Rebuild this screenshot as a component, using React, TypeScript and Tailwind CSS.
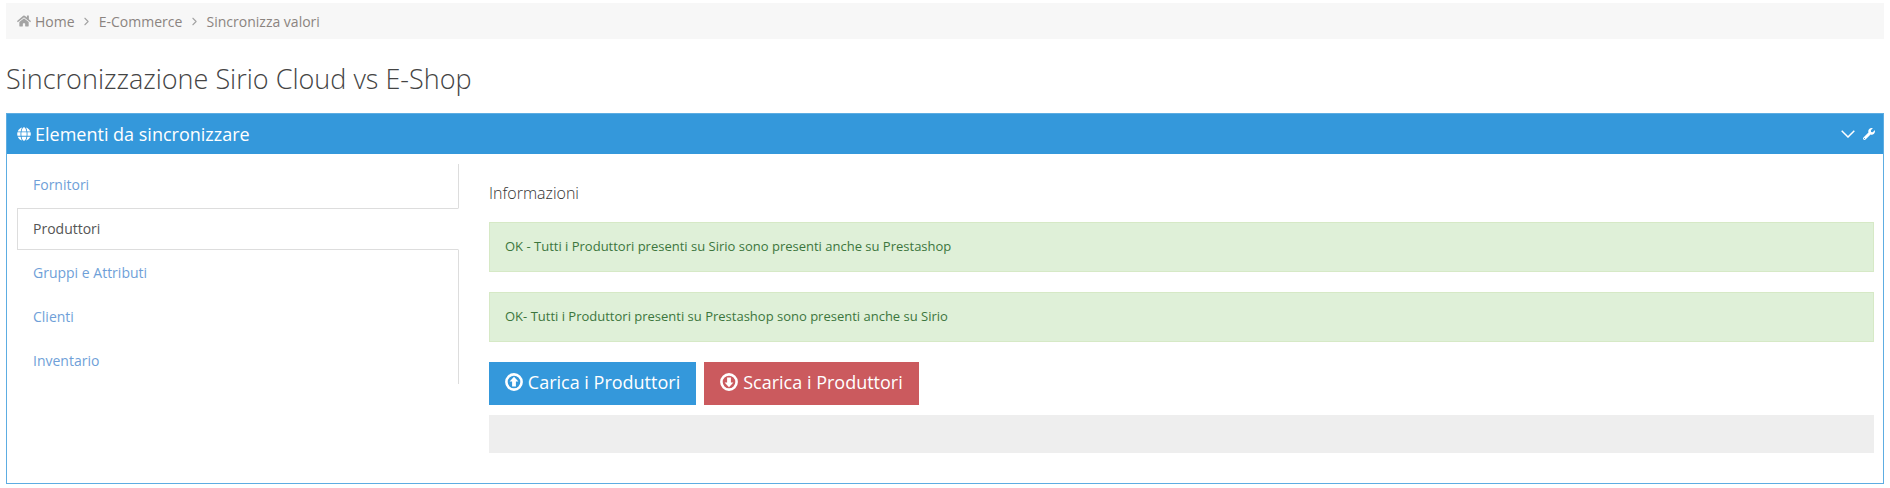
import { ChevronRight } from 'lucide-react'
import { FaGlobe, FaHome, FaWrench } from 'react-icons/fa'

const tabs = [
  { label: 'Fornitori', cls: 'h-[44px] pl-[16px] pb-[4px] text-[#6f9fd8]' },
  { label: 'Produttori', cls: 'h-[42px] pl-[15px] pb-[2px] -mr-px bg-white border border-[#dddddd] border-r-white text-[#555555]' },
  { label: 'Gruppi e Attributi', cls: 'h-[44px] pl-[16px] text-[#6f9fd8]' },
  { label: 'Clienti', cls: 'h-[44px] pl-[16px] text-[#6f9fd8]' },
  { label: 'Inventario', cls: 'h-[44px] pl-[16px] text-[#6f9fd8]' },
]

// font-awesome 4 style arrow in a ring
const CircleArrow = ({ down }: { down?: boolean }) => (
  <svg viewBox="0 0 18 18" className={down ? 'w-[18px] h-[18px] rotate-180 -mt-[2px]' : 'w-[18px] h-[18px] -mt-[2px]'} fill="none">
    <circle cx="9" cy="9" r="7.6" stroke="white" strokeWidth="2.6" />
    <path d="M9 3.8 L13.4 8.6 L10.9 8.6 L10.9 13.4 L7.1 13.4 L7.1 8.6 L4.6 8.6 Z" fill="white" />
  </svg>
)

const App = () => {
  return (
    <div className="w-[1890px] h-[488px] bg-white overflow-hidden font-['Open_Sans',sans-serif] text-[14px] pt-[3px] px-[6px]">
      {/* breadcrumb */}
      <div className="h-[36px] w-[1878px] bg-[#f7f7f7] flex items-center pl-[11px] text-[14px] text-[#8b8480]">
        <FaHome className="w-[14px] h-[14px] text-[#a3a3a3] mr-[4px]" />
        <span>Home</span>
        <ChevronRight className="w-[13px] h-[13px] mx-[5.6px] text-[#a3a3a3]" />
        <span>E-Commerce</span>
        <ChevronRight className="w-[13px] h-[13px] mx-[5.6px] text-[#a3a3a3]" />
        <span>Sincronizza valori</span>
      </div>

      <h1 className="mt-[20px] h-[54px] text-[27px] leading-[40px] font-light text-[#444444]">Sincronizzazione Sirio Cloud vs E-Shop</h1>

      {/* panel */}
      <div className="w-[1878px] h-[371px] border border-[#5dade2]">
        <div className="h-[40px] bg-[#3498db] flex items-center justify-between pl-[10px] pr-[8px] text-white">
          <div className="flex items-center gap-[4px]">
            <FaGlobe className="w-[14px] h-[14px]" />
            <span className="text-[18px] leading-[24px] -mt-[1px]">Elementi da sincronizzare</span>
          </div>
          <div className="flex items-center gap-[8px]">
            <svg viewBox="0 0 14 8" className="w-[14px] h-[8px]" fill="none">
              <path d="M0.7 0.7 L7 7 L13.3 0.7" stroke="white" strokeWidth="1.5" />
            </svg>
            <FaWrench className="w-[12px] h-[12px]" />
          </div>
        </div>

        <div className="flex pl-[10px] pr-[9px] pt-[10px]">
          <div className="w-[442px] h-[220px] border-r border-[#dddddd] flex flex-col shrink-0">
            {tabs.map((t) => (
              <div key={t.label} className={`flex items-center ${t.cls}`}>
                {t.label}
              </div>
            ))}
          </div>

          <div className="flex-1 pl-[30px] pt-[18px] min-w-0">
            <div className="text-[16px] leading-[22px] font-light text-[#333333] mb-[18px]">Informazioni</div>
            <div className="h-[50px] bg-[#dff0d8] border border-[#d6e9c6] flex items-center pl-[15px] text-[13px] text-[#3c763d] mb-[20px]">
              OK - Tutti i Produttori presenti su Sirio sono presenti anche su Prestashop
            </div>
            <div className="h-[50px] bg-[#dff0d8] border border-[#d6e9c6] flex items-center pl-[15px] text-[13px] text-[#3c763d] mb-[20px]">
              OK- Tutti i Produttori presenti su Prestashop sono presenti anche su Sirio
            </div>
            <div className="flex gap-[8px] mb-[10px]">
              <button className="h-[43px] w-[207px] pb-[2px] bg-[#3498db] text-white text-[18px] flex items-center justify-center gap-[5px]">
                <CircleArrow />
                Carica i Produttori
              </button>
              <button className="h-[43px] w-[215px] pb-[2px] bg-[#cb5a5e] text-white text-[18px] flex items-center justify-center gap-[5px]">
                <CircleArrow down />
                Scarica i Produttori
              </button>
            </div>
            <div className="h-[38px] bg-[#eeeeee]" />
          </div>
        </div>
      </div>
    </div>
  )
}

export default App
